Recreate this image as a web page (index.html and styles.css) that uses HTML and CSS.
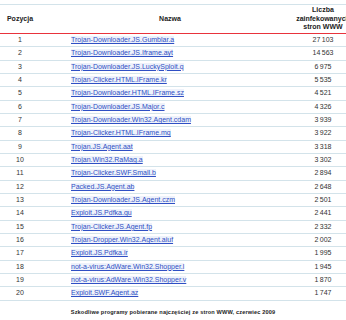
FILE: index.html
```html
<!DOCTYPE html>
<html lang="pl">
<head>
    <meta charset="UTF-8">
    <title>Szkodliwe programy</title>
    <link rel="stylesheet" href="styles.css">
</head>
<body>
    <div class="page">
        <table class="ranking">
            <thead>
                <tr>
                    <th class="pos">Pozycja</th>
                    <th class="name-head">Nazwa</th>
                    <th class="count"><span class="count-head">Liczba zainfekowanych stron WWW</span></th>
                </tr>
            </thead>
            <tbody>
                <tr><td class="pos">1</td><td class="name"><a href="#">Trojan-Downloader.JS.Gumblar.a</a></td><td class="count">27&thinsp;103</td></tr>
                <tr><td class="pos">2</td><td class="name"><a href="#">Trojan-Downloader.JS.Iframe.ayt</a></td><td class="count">14&thinsp;563</td></tr>
                <tr><td class="pos">3</td><td class="name"><a href="#">Trojan-Downloader.JS.LuckySploit.q</a></td><td class="count">6&thinsp;975</td></tr>
                <tr><td class="pos">4</td><td class="name"><a href="#">Trojan-Clicker.HTML.IFrame.kr</a></td><td class="count">5&thinsp;535</td></tr>
                <tr><td class="pos">5</td><td class="name"><a href="#">Trojan-Downloader.HTML.IFrame.sz</a></td><td class="count">4&thinsp;521</td></tr>
                <tr><td class="pos">6</td><td class="name"><a href="#">Trojan-Downloader.JS.Major.c</a></td><td class="count">4&thinsp;326</td></tr>
                <tr><td class="pos">7</td><td class="name"><a href="#">Trojan-Downloader.Win32.Agent.cdam</a></td><td class="count">3&thinsp;939</td></tr>
                <tr><td class="pos">8</td><td class="name"><a href="#">Trojan-Clicker.HTML.IFrame.mq</a></td><td class="count">3&thinsp;922</td></tr>
                <tr><td class="pos">9</td><td class="name"><a href="#">Trojan.JS.Agent.aat</a></td><td class="count">3&thinsp;318</td></tr>
                <tr><td class="pos">10</td><td class="name"><a href="#">Trojan.Win32.RaMag.a</a></td><td class="count">3&thinsp;302</td></tr>
                <tr><td class="pos">11</td><td class="name"><a href="#">Trojan-Clicker.SWF.Small.b</a></td><td class="count">2&thinsp;894</td></tr>
                <tr><td class="pos">12</td><td class="name"><a href="#">Packed.JS.Agent.ab</a></td><td class="count">2&thinsp;648</td></tr>
                <tr><td class="pos">13</td><td class="name"><a href="#">Trojan-Downloader.JS.Agent.czm</a></td><td class="count">2&thinsp;501</td></tr>
                <tr><td class="pos">14</td><td class="name"><a href="#">Exploit.JS.Pdfka.gu</a></td><td class="count">2&thinsp;441</td></tr>
                <tr><td class="pos">15</td><td class="name"><a href="#">Trojan-Clicker.JS.Agent.fp</a></td><td class="count">2&thinsp;332</td></tr>
                <tr><td class="pos">16</td><td class="name"><a href="#">Trojan-Dropper.Win32.Agent.aiuf</a></td><td class="count">2&thinsp;002</td></tr>
                <tr><td class="pos">17</td><td class="name"><a href="#">Exploit.JS.Pdfka.ir</a></td><td class="count">1&thinsp;995</td></tr>
                <tr><td class="pos">18</td><td class="name"><a href="#">not-a-virus:AdWare.Win32.Shopper.l</a></td><td class="count">1&thinsp;945</td></tr>
                <tr><td class="pos">19</td><td class="name"><a href="#">not-a-virus:AdWare.Win32.Shopper.v</a></td><td class="count">1&thinsp;870</td></tr>
                <tr><td class="pos">20</td><td class="name"><a href="#">Exploit.SWF.Agent.az</a></td><td class="count">1&thinsp;747</td></tr>
            </tbody>
        </table>
        <p class="caption">Szkodliwe programy pobierane najczęściej ze stron WWW, czerwiec 2009</p>
    </div>
</body>
</html>
```

FILE: styles.css
```css
body {
    margin: 0;
    padding: 0;
    background: #fff;
    font-family: "Liberation Sans", Arial, sans-serif;
    color: #333;
}
.page {
    width: 346px;
    padding-top: 4px;
    overflow: hidden;
}
.ranking {
    width: 346px;
    table-layout: fixed;
    border-collapse: collapse;
    border-top: 1px solid #d3e3ea;
    font-size: 7px;
}
.ranking th {
    height: 28px;
    padding: 0;
    font-weight: bold;
    color: #222;
    line-height: 8.4px;
    vertical-align: middle;
    border-bottom: 1px solid #e8333c;
}
.ranking td {
    height: 12.33px;
    padding: 0;
    line-height: 12px;
    border-bottom: 1px solid #d3e3ea;
}
.pos {
    width: 40px;
    text-align: center;
}
.name-head {
    width: 260px;
    text-align: center;
}
.name {
    padding-left: 31px !important;
    text-align: left;
}
.name a {
    color: #2f4fc4;
    text-decoration: underline;
    background: #eef2fb;
}
.count {
    width: 46px;
    text-align: center;
}
.count-head {
    display: block;
    margin: 0 -12px;
}
.caption {
    margin: 8px 0 0;
    text-align: center;
    font-size: 5.6px;
    font-weight: bold;
    letter-spacing: 0.15px;
    color: #222;
}
```
